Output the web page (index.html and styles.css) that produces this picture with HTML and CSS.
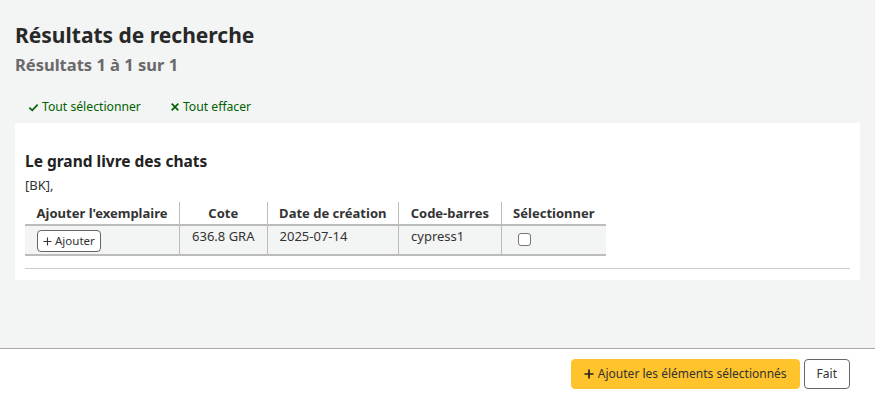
FILE: index.html
```html
<!DOCTYPE html>
<html lang="fr">
<head>
<meta charset="utf-8">
<title>Résultats de recherche</title>
<link rel="stylesheet" href="styles.css">
</head>
<body>
<main class="main">
  <h1 class="title">Résultats de recherche</h1>
  <h2 class="subtitle">Résultats 1 à 1 sur 1</h2>
  <div class="toolbar">
    <a class="tlink" href="#"><svg class="ico" viewBox="0 0 12 12" width="11" height="11"><path d="M1.5 6.2 L4.6 9.2 L10.5 2.8" fill="none" stroke="#006100" stroke-width="1.8"/></svg>Tout sélectionner</a>
    <a class="tlink" href="#"><svg class="ico" viewBox="0 0 12 12" width="10" height="10"><path d="M2 2 L10 10 M10 2 L2 10" fill="none" stroke="#006100" stroke-width="2"/></svg>Tout effacer</a>
  </div>
  <section class="panel">
    <h3 class="rtitle">Le grand livre des chats</h3>
    <p class="itype">[BK],</p>
    <table class="items">
      <thead>
        <tr><th>Ajouter l'exemplaire</th><th>Cote</th><th>Date de création</th><th>Code-barres</th><th>Sélectionner</th></tr>
      </thead>
      <tbody>
        <tr>
          <td><button class="btn-sm" type="button"><svg class="pl" viewBox="0 0 10 10" width="9" height="9"><path d="M5 0.5 V9.5 M0.5 5 H9.5" stroke="#333" stroke-width="1.2" fill="none"/></svg>Ajouter</button></td>
          <td>636.8 GRA</td>
          <td>2025-07-14</td>
          <td>cypress1</td>
          <td><span class="cb"></span></td>
        </tr>
      </tbody>
    </table>
    <hr class="sep">
  </section>
</main>
<footer class="footer">
  <button class="btn btn-primary" type="button"><svg class="pl" viewBox="0 0 10 10" width="10" height="10"><path d="M5 0.5 V9.5 M0.5 5 H9.5" stroke="#222" stroke-width="1.7" fill="none"/></svg>Ajouter les éléments sélectionnés</button>
  <button class="btn btn-default" type="button">Fait</button>
</footer>
</body>
</html>
```
FILE: styles.css
```css
* { box-sizing: border-box; }
html, body { margin: 0; padding: 0; }
body {
  background: #f3f4f4;
  font-family: "Noto Sans", "Open Sans", sans-serif;
  color: #333;
  font-size: 13px;
  height: 400px;
}
.main { padding: 17px 15px 0 15px; }
.title {
  margin: 0;
  font-size: 21px;
  font-weight: 700;
  color: #282828;
  line-height: 36px;
}
.subtitle {
  margin: 0;
  font-size: 16.5px;
  font-weight: 700;
  color: #696969;
  line-height: 24px;
}
.toolbar {
  display: flex;
  gap: 29px;
  padding: 21px 0 0 13px;
  height: 46px;
}
.tlink {
  color: #006100;
  text-decoration: none;
  font-size: 12.2px;
  display: inline-flex;
  align-items: center;
  gap: 3px;
  line-height: 18px;
  height: 18px;
}
.ico { display: block; }
.panel {
  background: #fff;
  padding: 26px 10px 10px 10px;
  height: 157px;
}
.rtitle {
  margin: 0;
  font-size: 15.5px;
  font-weight: 700;
  color: #222;
  line-height: 24px;
}
.itype {
  margin: 2px 0 7px 0;
  font-size: 13px;
  line-height: 20px;
}
.items {
  border-collapse: collapse;
  font-size: 13px;
}
.items th {
  font-weight: 700;
  padding: 2px 11.6px 1px 11.6px;
  line-height: 19px;
  text-align: center;
  border-left: 1px solid #bcbcbc;
  border-bottom: 2px solid #bcbcbc;
  white-space: nowrap;
}
.items td {
  background: #f3f4f4;
  padding: 2px 12px 2px 12px;
  line-height: 18px;
  vertical-align: top;
  border-left: 1px solid #bcbcbc;
  border-bottom: 2px solid #bcbcbc;
  white-space: nowrap;
}
.items th:first-child, .items td:first-child { border-left: 0; }
.items td:nth-child(2),
.items td:nth-child(3),
.items td:nth-child(4) { padding-top: 1px; }
.btn-sm {
  font-family: inherit;
  font-size: 11.5px;
  color: #333;
  background: #fff;
  border: 1px solid #666;
  border-radius: 4px;
  padding: 1px 5px;
  line-height: 18px;
  margin-top: 2px;
  display: inline-flex;
  align-items: center;
  gap: 3px;
}
.pl { display: block; }
.cb {
  display: inline-block;
  width: 13px;
  height: 13px;
  border: 1px solid #767676;
  border-radius: 3px;
  background: #fff;
  margin: 5px 0 0 4px;
  vertical-align: top;
}
.sep {
  margin: 12px 0 0 0;
  border: 0;
  border-top: 1px solid #ccc;
}
.footer {
  position: fixed;
  left: 0;
  right: 0;
  bottom: 0;
  height: 52px;
  background: #fff;
  border-top: 1px solid #a8a8a8;
  display: flex;
  justify-content: flex-end;
  align-items: flex-start;
  gap: 4px;
  padding: 10px 25px 0 0;
}
.btn {
  font-family: inherit;
  font-size: 12px;
  color: #333;
  height: 30px;
  border-radius: 4px;
  padding: 0 12px;
  line-height: 28px;
}
.btn-primary {
  background: #ffc32b;
  border: 1px solid #ffc32b;
  display: inline-flex;
  align-items: center;
  gap: 4px;
}
.btn-default {
  background: #fff;
  border: 1px solid #666;
  padding: 0 12px;
}
```
